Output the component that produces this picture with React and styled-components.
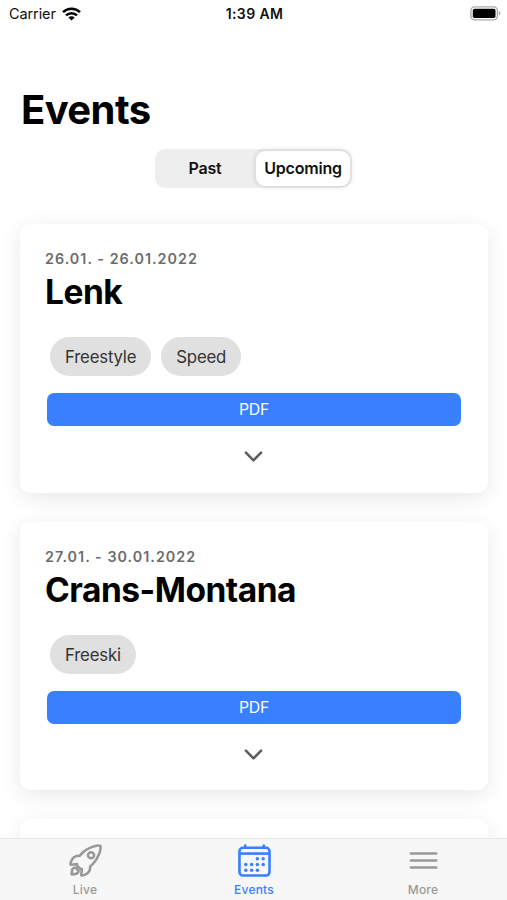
import React from 'react';
import styled, { createGlobalStyle } from 'styled-components';
import { IoCalendarOutline, IoChevronDown, IoMenuOutline } from 'react-icons/io5';

const GlobalStyle = createGlobalStyle`
  * {
    box-sizing: border-box;
  }

  body {
    margin: 0;
    background: #fff;
    font-family: Inter, 'Liberation Sans', sans-serif;
    -webkit-font-smoothing: antialiased;
  }

  button {
    font-family: inherit;
    border: none;
    padding: 0;
  }
`;

const Screen = styled.div`
  display: flex;
  flex-direction: column;
  height: 100vh;
  overflow: hidden;
  background: #fff;
`;

const StatusBar = styled.header`
  display: grid;
  grid-template-columns: 1fr auto 1fr;
  align-items: center;
  flex: none;
  height: 27px;
  padding: 0 6px 0 9px;
  color: #111;
  font-size: 14.5px;
`;

const Carrier = styled.div`
  display: flex;
  align-items: center;
  gap: 6px;
  letter-spacing: -0.1px;
`;

const Time = styled.div`
  margin-left: -1px;
  font-size: 14px;
  font-weight: 600;
  letter-spacing: 0.4px;
`;

const BatterySlot = styled.div`
  display: flex;
  justify-content: flex-end;
`;

const Content = styled.main`
  flex: 1;
  min-height: 0;
  overflow: hidden;
  padding: 56px 19px 0 20px;
`;

const Title = styled.h1`
  margin: 0 0 0 1px;
  color: #000;
  font-size: 40px;
  font-weight: 700;
  line-height: 53px;
  letter-spacing: -0.6px;
`;

const Segment = styled.div`
  display: grid;
  grid-template-columns: 99px 94px;
  width: 197px;
  height: 39px;
  margin: 13px auto 36px 135px;
  padding: 2px;
  border-radius: 10px;
  background: #eee;
`;

const SegmentButton = styled.button`
  padding: ${props => (props.$active ? '0 0 2px' : '0 3px 2px 0')};
  border-radius: 9px;
  background: ${props => (props.$active ? '#fff' : 'transparent')};
  box-shadow: ${props =>
    props.$active ? '0 0 5px 1px rgba(0, 0, 0, 0.12)' : 'none'};
  color: #111;
  font-size: 16px;
  font-weight: 600;
  letter-spacing: -0.2px;
  white-space: nowrap;
`;

const Card = styled.article`
  display: flex;
  flex-direction: column;
  height: 268.5px;
  margin-bottom: 29px;
  padding: 25px 27px 0 25px;
  border-radius: 11px;
  background: #fff;
  box-shadow: 0 5px 21px rgba(0, 0, 0, 0.09);
`;

const Dates = styled.div`
  color: #6c6c6c;
  font-size: 14.3px;
  font-weight: 600;
  line-height: 19px;
  letter-spacing: 1.03px;
`;

const Place = styled.h2`
  margin: 3px 0 0;
  color: #000;
  font-size: 33.5px;
  font-weight: 700;
  line-height: 42px;
  letter-spacing: -0.5px;
`;

const Chips = styled.div`
  display: flex;
  gap: 10px;
  margin: 24px 0 17px 5px;
`;

const Chip = styled.span`
  height: 39px;
  padding: 0 15px;
  border-radius: 20px;
  background: #e0e0e0;
  color: #333;
  font-size: 16.8px;
  line-height: 40px;
  letter-spacing: -0.2px;
`;

const PdfButton = styled.button`
  flex: none;
  height: 33px;
  margin-left: 2px;
  border-radius: 7px;
  background: #3880ff;
  color: #fff;
  font-size: 15.8px;
  letter-spacing: -0.3px;
`;

const Expand = styled.div`
  display: flex;
  justify-content: center;
  margin: 17px 0 0 1px;
  color: #5c5c5c;
  font-size: 27px;
`;

const TabBar = styled.nav`
  display: grid;
  grid-template-columns: repeat(3, 1fr);
  flex: none;
  height: 62px;
  border-top: 1px solid #e6e6e6;
  background: #f7f7f7;
`;

const Tab = styled.a`
  display: flex;
  flex-direction: column;
  align-items: center;
  padding: 3px 0 0 1px;
  color: ${props => (props.$active ? '#3880ff' : '#999')};
  font-size: 12px;
  font-weight: 500;
  line-height: 16px;
  letter-spacing: 0.2px;

  svg {
    flex: none;
    width: 37px;
    height: 37px;
    margin-bottom: 3px;
  }

  path,
  rect {
    stroke-width: 36px;
  }
`;

const RocketIcon = () => (
  <svg
    viewBox="0 0 512 512"
    fill="none"
    stroke="currentColor"
    strokeLinecap="round"
    strokeLinejoin="round"
  >
    <path d="M461.81 53.81a4.4 4.4 0 0 0-3.3-3.39c-54.38-13.3-180 34.09-248.13 102.17a294.9 294.9 0 0 0-33.09 39.08c-21-1.9-42-.3-59.88 7.5-50.49 22.2-65.18 80.18-69.28 105.07a9 9 0 0 0 9.8 10.4l81.07-8.9a180.29 180.29 0 0 0 1.1 18.3 18.15 18.15 0 0 0 5.3 11.09l31.39 31.39a18.15 18.15 0 0 0 11.1 5.3 179.91 179.91 0 0 0 18.19 1.1l-8.89 81a9 9 0 0 0 10.39 9.79c24.9-4 83-18.69 105.07-69.17 7.8-17.9 9.4-38.79 7.6-59.69a293.91 293.91 0 0 0 39.19-33.09c68.38-68 115.47-190.86 102.37-247.95z" />
    <circle cx="333" cy="183" r="42" strokeWidth="36" />
    <path d="M112 352a45 45 0 0 0-28.7 12.84C65.67 382.52 64 448 64 448s65.52-1.67 83.15-19.31A44.73 44.73 0 0 0 160 400z" />
  </svg>
);

const WifiIcon = () => (
  <svg width="19" height="14" viewBox="0 0 19 14">
    <g fill="none" stroke="#000" strokeWidth="2.5">
      <path d="M1 5.1a12.2 12.2 0 0 1 17 0" />
      <path d="M4 8.4a7.9 7.9 0 0 1 11 0" />
    </g>
    <path d="M9.5 13.6 6.4 10.5a4.4 4.4 0 0 1 6.2 0z" />
  </svg>
);

const BatteryIcon = () => (
  <svg width="31" height="15" viewBox="0 0 31 15">
    <rect x="0.9" y="0.9" width="26.5" height="13" rx="3.8" fill="#fff" stroke="#aaa" strokeWidth="1.4" />
    <rect x="2.8" y="2.8" width="22.7" height="9.2" rx="1.8" />
    <path d="M28.8 5.3c2.2.7 2.2 3.5 0 4.2z" fill="#aaa" />
  </svg>
);

const events = [
  { dates: '26.01. - 26.01.2022', place: 'Lenk', tags: ['Freestyle', 'Speed'] },
  { dates: '27.01. - 30.01.2022', place: 'Crans-Montana', tags: ['Freeski'] },
];

const tabs = [
  { label: 'Live', icon: RocketIcon },
  { label: 'Events', icon: IoCalendarOutline, active: true },
  { label: 'More', icon: IoMenuOutline },
];

const EventCard = ({ dates, place, tags }) => (
  <Card>
    <Dates>{dates}</Dates>
    <Place>{place}</Place>
    <Chips>
      {tags.map(tag => (
        <Chip key={tag}>{tag}</Chip>
      ))}
    </Chips>
    <PdfButton>PDF</PdfButton>
    <Expand>
      <IoChevronDown />
    </Expand>
  </Card>
);

const App = () => (
  <>
    <GlobalStyle />
    <Screen>
      <StatusBar>
        <Carrier>
          Carrier
          <WifiIcon />
        </Carrier>
        <Time>1:39 AM</Time>
        <BatterySlot>
          <BatteryIcon />
        </BatterySlot>
      </StatusBar>
      <Content>
        <Title>Events</Title>
        <Segment>
          <SegmentButton>Past</SegmentButton>
          <SegmentButton $active>Upcoming</SegmentButton>
        </Segment>
        {events.map(event => (
          <EventCard key={event.place} {...event} />
        ))}
        <Card />
      </Content>
      <TabBar>
        {tabs.map(({ label, icon: Icon, active }) => (
          <Tab key={label} $active={active}>
            <Icon />
            {label}
          </Tab>
        ))}
      </TabBar>
    </Screen>
  </>
);

export default App;
